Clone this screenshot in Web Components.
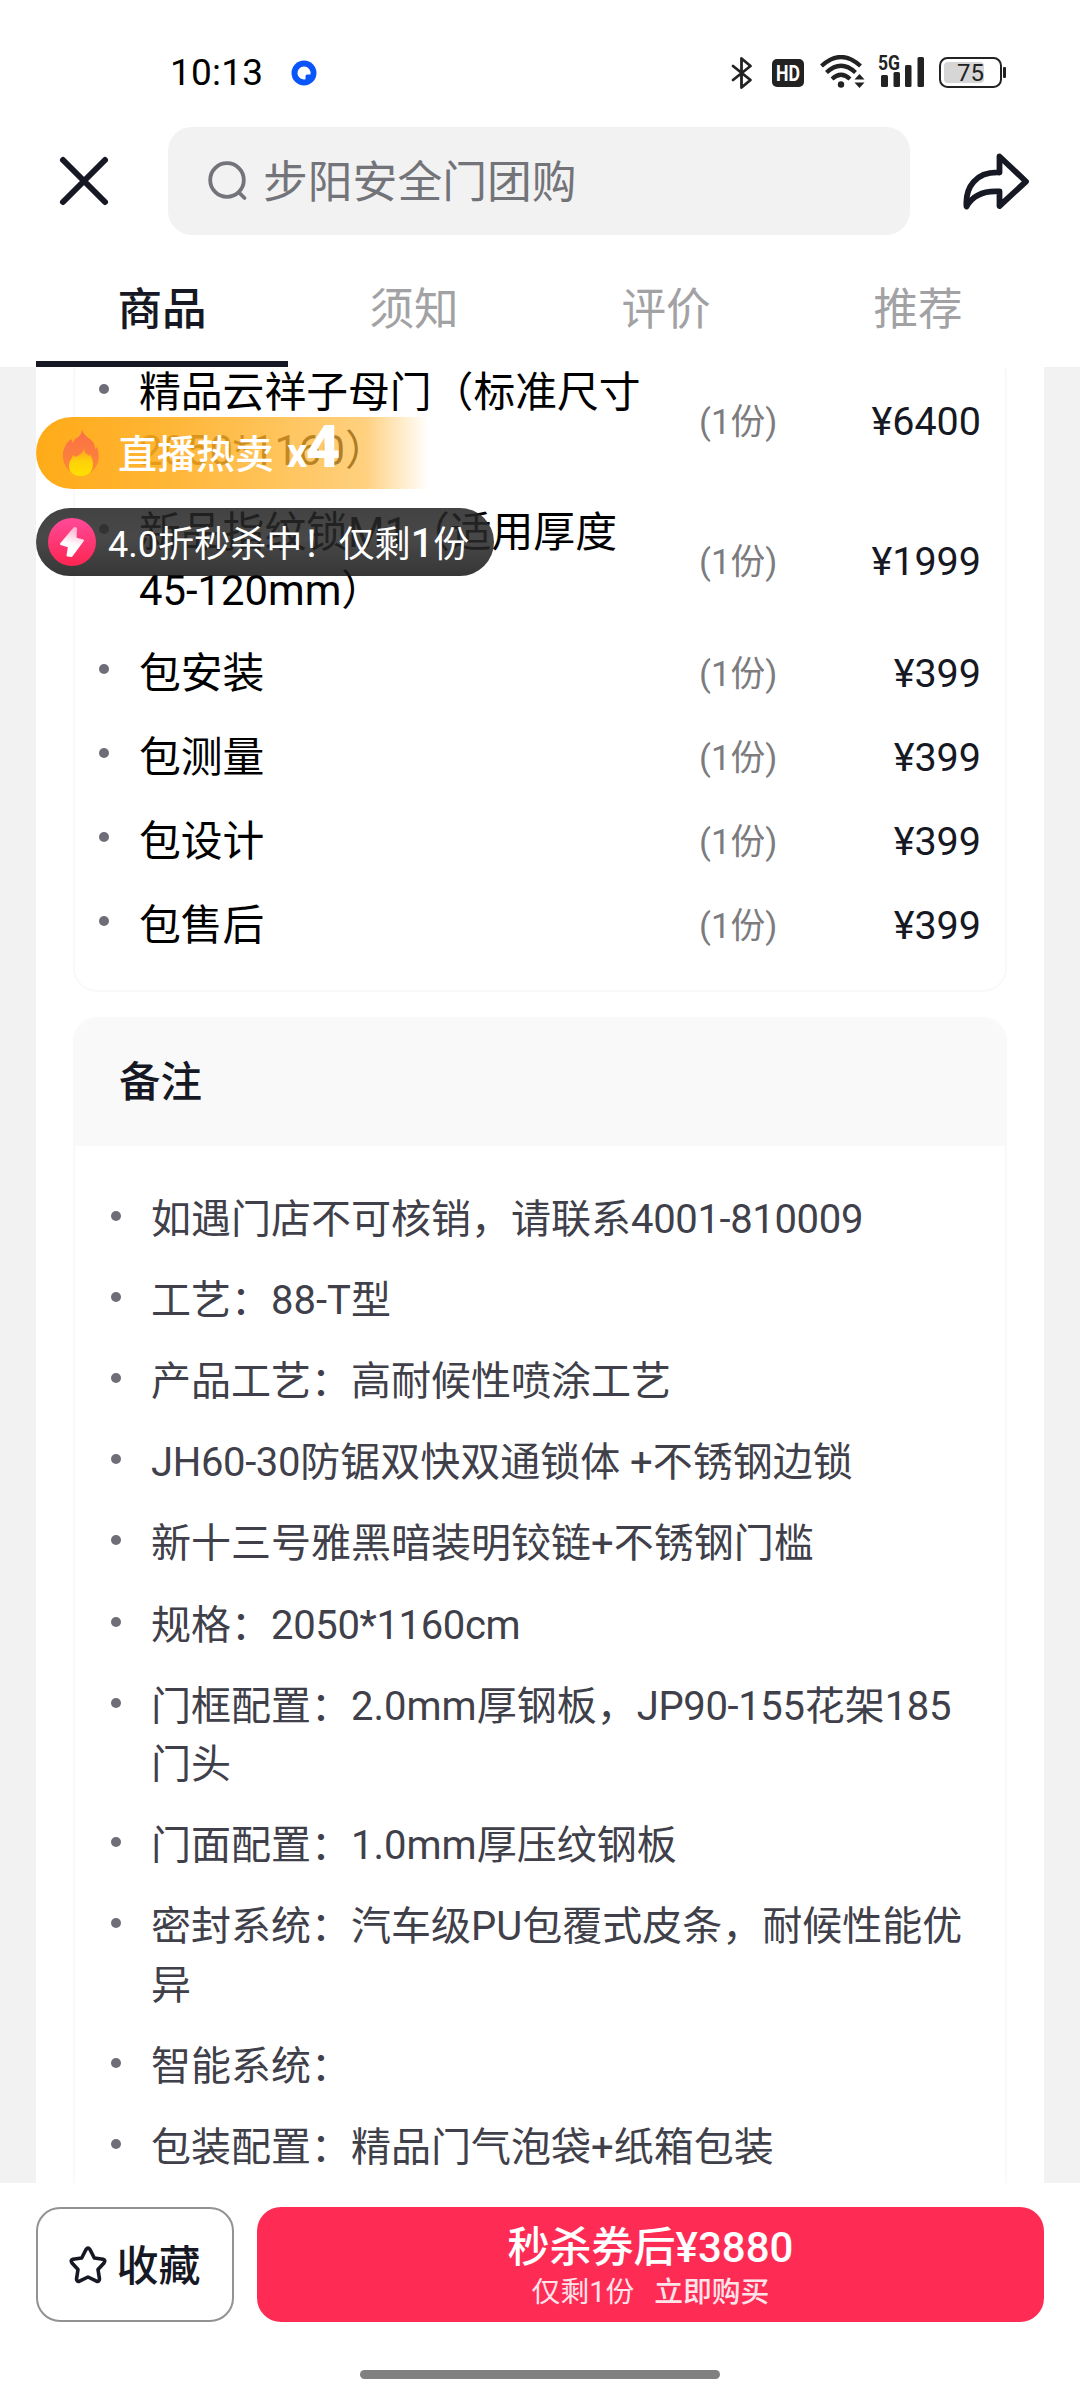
<!DOCTYPE html>
<html lang="zh-CN">
<head>
<meta charset="UTF-8">
<title>步阳安全门团购</title>
<style>
  body {
    margin: 0;
    width: 1080px;
    height: 2400px;
    overflow: hidden;
    background: #fff;
    color: #161823;
    font-family: Roboto, "Noto Sans CJK SC", sans-serif;
  }
  .num { letter-spacing: -0.35px; }
</style>
</head>
<body>
<deal-page>
  <status-bar slot="top" time="10:13" battery="75"></status-bar>
  <search-header slot="top">步阳安全门团购</search-header>
  <tab-bar slot="top" tabs="商品,须知,评价,推荐"></tab-bar>

  <info-card class="goods">
    <goods-row qty="(1份)" price="¥6400">精品云祥子母门（标准尺寸2050*1160）</goods-row>
    <goods-row qty="(1份)" price="¥1999">新品指纹锁M1（适用厚度45-120mm）</goods-row>
    <goods-row qty="(1份)" price="¥399">包安装</goods-row>
    <goods-row qty="(1份)" price="¥399">包测量</goods-row>
    <goods-row qty="(1份)" price="¥399">包设计</goods-row>
    <goods-row qty="(1份)" price="¥399">包售后</goods-row>
  </info-card>
  <info-card class="notes" heading="备注">
    <note-item>如遇门店不可核销，请联系<span class="num">4001-810009</span></note-item>
    <note-item>工艺：88-T型</note-item>
    <note-item>产品工艺：高耐候性喷涂工艺</note-item>
    <note-item><span class="num">JH60-30</span>防锯双快双通锁体 +不锈钢边锁</note-item>
    <note-item>新十三号雅黑暗装明铰链+不锈钢门槛</note-item>
    <note-item>规格：<span class="num">2050*1160cm</span></note-item>
    <note-item>门框配置：2.0mm厚钢板，<span class="num">JP90-155</span>花架<span class="num">185</span>门头</note-item>
    <note-item>门面配置：1.0mm厚压纹钢板</note-item>
    <note-item>密封系统：汽车级PU包覆式皮条，耐候性能优异</note-item>
    <note-item>智能系统：</note-item>
    <note-item>包装配置：精品门气泡袋+纸箱包装</note-item>
  </info-card>

  <hot-badge slot="overlay" count="4">直播热卖</hot-badge>
  <seckill-badge slot="overlay">4.0折秒杀中！仅剩<b>1</b>份</seckill-badge>

  <buy-bar slot="bottom">
    <span slot="collect">收藏</span>
    <span slot="price">秒杀券后¥3880</span>
    <span slot="left">仅剩1份</span>
    <span slot="action">立即购买</span>
  </buy-bar>
</deal-page>

<script>
function attach(el, html) {
    const template = document.createElement('template');
    template.innerHTML = html;
    el.attachShadow({ mode: 'open' }).appendChild(template.content.cloneNode(true));
}

class DealPage extends HTMLElement {
    constructor() {
        super();
        attach(this, `
          <style>
            :host {
              display: grid;
              grid-template-rows: 367px 1816px 217px;
              width: 1080px;
              height: 2400px;
              position: relative;
            }
            .content {
              overflow: hidden;
              background: #f2f2f2;
              padding: 0 36px;
            }
            .sheet {
              display: flow-root;
              box-sizing: border-box;
              height: 100%;
              background: #fff;
              padding: 0 37px;
            }
            /* badges float over the scrolled list */
            .overlay {
              position: absolute;
              left: 36px;
              top: 417px;
              display: flex;
              flex-direction: column;
              align-items: flex-start;
              gap: 19px;
            }
          </style>
          <header><slot name="top"></slot></header>
          <main class="content"><div class="sheet"><slot></slot></div></main>
          <slot name="bottom"></slot>
          <div class="overlay"><slot name="overlay"></slot></div>
        `);
    }
}

class StatusBar extends HTMLElement {
    constructor() {
        super();
        attach(this, `
          <style>
            :host {
              display: flex;
              align-items: center;
              height: 127px;
              box-sizing: border-box;
              padding: 19px 73px 0 170px;
            }
            .time {
              font-size: 37px;
              font-weight: 450;
              line-height: 40px;
              color: #000;
              letter-spacing: 0.2px;
            }
            .dot { margin-left: 28px; }
            .icons {
              margin-left: auto;
              display: flex;
              align-items: center;
            }
            svg { display: block; }
            text { font-family: Roboto, sans-serif; }
          </style>
          <span class="time"></span>
          <svg class="dot" width="26" height="26" viewBox="0 0 26 26">
            <circle cx="13" cy="13" r="12.5" fill="#0a55fa"/>
            <path d="M13 6.500a6.500 6.500 0 0 1 6.400 8h-3.200q-1.700 0-1.700 1.700v3.100a6.500 6.500 0 1 1-1.500-12.800z" fill="#fff"/>
          </svg>
          <div class="icons">
            <svg width="41" height="36" viewBox="0 0 41 36" fill="none" stroke="#222" stroke-width="2.800" stroke-linejoin="round" stroke-linecap="round">
              <path d="M2 11L19.500 25L10.500 32.500V3.500L19.500 11L2 25"/>
            </svg>
            <svg width="48" height="36" viewBox="0 0 48 36">
              <rect x="0" y="4" width="32" height="28" rx="5" fill="#222"/>
              <text x="16" y="26" font-size="22" font-weight="700" fill="#fff" text-anchor="middle" textLength="24" lengthAdjust="spacingAndGlyphs">HD</text>
            </svg>
            <svg width="57" height="36" viewBox="0 0 57 36">
              <g fill="none" stroke="#222" stroke-width="4.200">
                <path d="M1.500 11Q21 -7 40.500 11"/>
                <path d="M6.500 17.500Q21 4 35.500 17.500"/>
                <path d="M12 24Q21 15.500 30 24"/>
              </g>
              <circle cx="21" cy="29.500" r="3.200" fill="#222"/>
              <path d="M34.500 24.500L39.500 19L44.500 24.500zM34.500 27.500L39.500 33L44.500 27.500z" fill="#222"/>
            </svg>
            <svg width="62" height="36" viewBox="0 0 62 36" fill="#222">
              <text x="1" y="15" font-size="20" font-weight="700" textLength="22" lengthAdjust="spacingAndGlyphs">5G</text>
              <rect x="4" y="20" width="7" height="12" rx="1.500"/>
              <rect x="16.500" y="17" width="6.500" height="15" rx="1.500"/>
              <rect x="28" y="10" width="6.500" height="22" rx="1.500"/>
              <rect x="40.500" y="2" width="6.500" height="30" rx="1.500"/>
            </svg>
            <svg width="68" height="36" viewBox="0 0 68 36">
              <rect x="1" y="3" width="61" height="29" rx="7.500" fill="none" stroke="#222" stroke-width="2"/>
              <rect x="5" y="7" width="40" height="21" rx="4" fill="#d6d6d6"/>
              <rect x="64" y="12" width="3" height="11" rx="1" fill="#222"/>
              <text class="battery" x="31.500" y="26" font-size="24" fill="#222" text-anchor="middle"></text>
            </svg>
          </div>
        `);
    }

    connectedCallback() {
        this.shadowRoot.querySelector('.time').textContent = this.getAttribute('time');
        this.shadowRoot.querySelector('.battery').textContent = this.getAttribute('battery');
    }
}

class SearchHeader extends HTMLElement {
    constructor() {
        super();
        attach(this, `
          <style>
            :host {
              display: grid;
              grid-template-columns: 168px 742px 170px;
              height: 108px;
            }
            .side {
              display: flex;
              align-items: center;
            }
            .close { padding-left: 58px; }
            .share { padding-left: 51px; }
            .box {
              display: flex;
              align-items: center;
              gap: 15px;
              padding-left: 38px;
              border-radius: 24px;
              background: #f2f2f3;
              color: #737479;
              font-size: 44.800px;
              line-height: 60px;
            }
            .text { padding-top: 3px; }
          </style>
          <div class="side close">
            <svg width="52" height="52" viewBox="0 0 52 52" fill="none" stroke="#161823" stroke-width="6" stroke-linecap="round">
              <path d="M5 5L47 47M47 5L5 47"/>
            </svg>
          </div>
          <div class="box">
            <svg width="42" height="42" viewBox="0 0 42 42" fill="none" stroke="#737479" stroke-width="3.800" stroke-linecap="round">
              <circle cx="21" cy="20" r="16.800"/>
              <path d="M33.500 33L38.500 38"/>
            </svg>
            <span class="text"><slot></slot></span>
          </div>
          <div class="side share">
            <svg width="70" height="60" viewBox="0 0 70 60" fill="none" stroke="#161823" stroke-width="5.800" stroke-linejoin="round">
              <path d="M38.500 5.500L65 30.500L38.500 55V40.500C24 39.500 12 44 5.500 55.500C4 36 15 20.500 38.500 21.500Z"/>
            </svg>
          </div>
        `);
    }
}

class TabBar extends HTMLElement {
    constructor() {
        super();
        attach(this, `
          <style>
            :host {
              display: grid;
              grid-template-columns: repeat(4, 252px);
              padding: 0 36px;
              height: 132px;
            }
            .tab {
              box-sizing: border-box;
              padding-top: 45px;
              text-align: center;
              font-size: 44.600px;
              line-height: 60px;
              color: #a2a2a5;
              border-bottom: 6px solid transparent;
            }
            .tab.active {
              color: #161823;
              font-weight: 500;
              border-color: #161823;
            }
          </style>
        `);
    }

    connectedCallback() {
        this.getAttribute('tabs').split(',').forEach((label, i) => {
            const tab = document.createElement('div');
            tab.className = i === 0 ? 'tab active' : 'tab';
            tab.textContent = label;
            this.shadowRoot.appendChild(tab);
        });
    }
}

class InfoCard extends HTMLElement {
    constructor() {
        super();
        attach(this, `
          <style>
            :host {
              display: block;
              box-sizing: border-box;
              border: 2px solid #f9f9f9;
              border-radius: 24px;
              overflow: hidden;
            }
            :host(.goods) {
              margin-top: -17px;
              padding: 0 24px 22px 25px;
            }
            :host(.notes) {
              margin-top: 25px;
              height: 1300px;
            }
            h3 {
              margin: 0;
              padding: 34px 44px 33px;
              background: #f9f9fa;
              font-size: 41.500px;
              font-weight: 500;
              line-height: 60px;
            }
            h3[hidden] { display: none; }
            :host(.notes) .body { padding: 33px 35px 0 36px; }
          </style>
          <h3 hidden></h3>
          <div class="body"><slot></slot></div>
        `);
    }

    connectedCallback() {
        const heading = this.getAttribute('heading');
        if (heading) {
            const h3 = this.shadowRoot.querySelector('h3');
            h3.textContent = heading;
            h3.hidden = false;
        }
    }
}

class GoodsRow extends HTMLElement {
    constructor() {
        super();
        attach(this, `
          <style>
            :host {
              display: grid;
              grid-template-columns: 39px 510px 1fr 160px;
              align-items: center;
              box-sizing: border-box;
              min-height: 84px;
              padding: 12px 0;
              line-height: 58px;
            }
            .bullet {
              width: 10px;
              height: 10px;
              margin: 20px 0 0 -1px;
              border-radius: 50%;
              background: #6e6d78;
              align-self: start;
            }
            .name {
              font-size: 41.800px;
              color: #000;
            }
            .qty {
              padding-left: 50px;
              font-size: 34.800px;
              color: #7c7c7f;
            }
            .price {
              font-size: 39.500px;
              text-align: right;
            }
          </style>
          <span class="bullet"></span>
          <span class="name"><slot></slot></span>
          <span class="qty"></span>
          <span class="price"></span>
        `);
    }

    connectedCallback() {
        this.shadowRoot.querySelector('.qty').textContent = this.getAttribute('qty');
        this.shadowRoot.querySelector('.price').textContent = this.getAttribute('price');
    }
}

class NoteItem extends HTMLElement {
    constructor() {
        super();
        attach(this, `
          <style>
            :host {
              display: flex;
              padding: 11.500px 0;
              font-size: 40px;
              line-height: 58.200px;
              color: #40404a;
            }
            .bullet {
              flex: none;
              width: 10px;
              height: 10px;
              margin: 20px 30px 0 0;
              border-radius: 50%;
              background: #6e6d78;
            }
          </style>
          <span class="bullet"></span>
          <span><slot></slot></span>
        `);
    }
}

class HotBadge extends HTMLElement {
    constructor() {
        super();
        attach(this, `
          <style>
            :host {
              display: flex;
              align-items: center;
              box-sizing: border-box;
              width: 392px;
              height: 72px;
              padding-left: 26px;
              border-radius: 36px 0 0 36px;
              background: linear-gradient(90deg, #ffab18 0%, rgba(255, 172, 28, 0.9) 30%, rgba(255, 178, 42, 0.78) 60%, rgba(255, 184, 60, 0.66) 84%, rgba(255, 190, 80, 0) 100%);
              color: #fff;
              font-size: 39px;
              font-weight: 500;
              line-height: 72px;
              white-space: nowrap;
            }
            .label {
              margin-left: 18px;
              padding-top: 4px;
            }
            .count {
              display: flex;
              align-items: baseline;
              margin-left: 13px;
              font-size: 40px;
              font-weight: 700;
            }
            .count b {
              font-size: 60px;
              line-height: 62px;
              margin-left: -2px;
            }
          </style>
          <svg width="38" height="50" viewBox="0 0 38 50">
            <defs>
              <linearGradient id="outer" x1="0" y1="0" x2="0" y2="1">
                <stop offset="0" stop-color="#fb6d48"/>
                <stop offset="1" stop-color="#fd8b35"/>
              </linearGradient>
              <linearGradient id="inner" x1="0" y1="0" x2="0" y2="1">
                <stop offset="0" stop-color="#ff9f22"/>
                <stop offset="0.5" stop-color="#ffd20a"/>
                <stop offset="1" stop-color="#ffe000"/>
              </linearGradient>
            </defs>
            <path d="M20 1C21 6 25 9 29 12C32 15 33 17 33 21L35 19C38 28 37 36 32 41C28 46 24 47 19 47C9 47 2 40 1 30C0 23 3 16 9 11L11 15L13 11C18 8 20 6 20 1Z" fill="url(#outer)"/>
            <path d="M22 20C22 25 25 26 27 28L28 26C34 36 31 48 19 48C8 48 5 40 8 33C10 30 10 29 11 27L13 29C18 27 21 25 22 20Z" fill="url(#inner)"/>
          </svg>
          <span class="label"><slot></slot></span>
          <span class="count">x<b></b></span>
        `);
    }

    connectedCallback() {
        this.shadowRoot.querySelector('b').textContent = this.getAttribute('count');
    }
}

class SeckillBadge extends HTMLElement {
    constructor() {
        super();
        attach(this, `
          <style>
            :host {
              display: flex;
              align-items: center;
              box-sizing: border-box;
              width: 458px;
              height: 68px;
              padding-left: 12px;
              border-radius: 34px;
              background: linear-gradient(180deg, rgba(36, 36, 36, 0.86), rgba(42, 42, 42, 0.86) 45%, rgba(22, 22, 22, 0.86));
              color: #fff;
              font-size: 36.100px;
              line-height: 68px;
              white-space: nowrap;
            }
            .label {
              margin-left: 12px;
              padding-top: 6px;
            }
            ::slotted(b) {
              font-size: 40px;
              font-weight: 500;
              line-height: 40px;
            }
          </style>
          <svg width="48" height="48" viewBox="0 0 48 48">
            <defs>
              <linearGradient id="disc" x1="0" y1="0" x2="0" y2="1">
                <stop offset="0" stop-color="#ff4a9a"/>
                <stop offset="1" stop-color="#fe2550"/>
              </linearGradient>
              <linearGradient id="bolt" x1="0.6" y1="0" x2="0.4" y2="1">
                <stop offset="0" stop-color="#ffb0d0"/>
                <stop offset="0.6" stop-color="#fff"/>
              </linearGradient>
            </defs>
            <circle cx="24" cy="24" r="24" fill="url(#disc)"/>
            <path d="M26.500 10L13 26L21 28.500L19.500 37.500L23.500 38L35 22.500L27.500 20.500L28 10.500Z" fill="url(#bolt)" stroke="url(#bolt)" stroke-width="2" stroke-linejoin="round"/>
          </svg>
          <span class="label"><slot></slot></span>
        `);
    }
}

class BuyBar extends HTMLElement {
    constructor() {
        super();
        attach(this, `
          <style>
            :host {
              display: grid;
              grid-template-columns: 198px 787px;
              grid-template-rows: 115px 9px;
              column-gap: 23px;
              row-gap: 48px;
              box-sizing: border-box;
              padding: 24px 36px 0;
              background: #fff;
            }
            .collect, .buy {
              box-sizing: border-box;
              display: flex;
              align-items: center;
              justify-content: center;
              border-radius: 24px;
            }
            .collect {
              gap: 9px;
              border: 2px solid #929294;
              font-size: 42px;
              font-weight: 500;
              line-height: 60px;
            }
            .label { padding-top: 4px; }
            .buy {
              flex-direction: column;
              background: #fe2c55;
              color: #fff;
            }
            .price {
              font-size: 42px;
              font-weight: 500;
              line-height: 50px;
              padding-top: 4px;
            }
            .sub {
              display: flex;
              gap: 20px;
              font-size: 28.800px;
              line-height: 38px;
              color: #ffe3e9;
            }
            .action { font-weight: 500; }
            .home {
              grid-column: 1 / 3;
              justify-self: center;
              width: 360px;
              border-radius: 5px;
              background: #808080;
            }
          </style>
          <div class="collect">
            <svg width="38" height="38" viewBox="0 0 38 38" fill="none" stroke="#161823" stroke-width="3.600" stroke-linejoin="round">
              <path d="M17 3.500Q19 0.800 21 3.500L25.300 12L34 13.300Q37 14.300 35 17L29 23.500L30.500 33Q30.300 36 27.500 35.200L19 31L10.500 35.200Q7.700 36 7.500 33L9 23.500L3 17Q1 14.300 4 13.300L12.700 12Z"/>
            </svg>
            <span class="label"><slot name="collect"></slot></span>
          </div>
          <div class="buy">
            <div class="price"><slot name="price"></slot></div>
            <div class="sub"><slot name="left"></slot><span class="action"><slot name="action"></slot></span></div>
          </div>
          <div class="home"></div>
        `);
    }
}

customElements.define('deal-page', DealPage);
customElements.define('status-bar', StatusBar);
customElements.define('search-header', SearchHeader);
customElements.define('tab-bar', TabBar);
customElements.define('info-card', InfoCard);
customElements.define('goods-row', GoodsRow);
customElements.define('note-item', NoteItem);
customElements.define('hot-badge', HotBadge);
customElements.define('seckill-badge', SeckillBadge);
customElements.define('buy-bar', BuyBar);
</script>
</body>
</html>
